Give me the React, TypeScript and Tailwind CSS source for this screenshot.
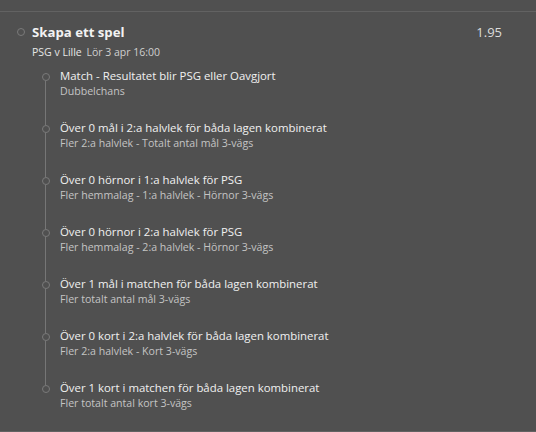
const items = [
  { title: 'Match - Resultatet blir PSG eller Oavgjort', sub: 'Dubbelchans' },
  { title: 'Över 0 mål i 2:a halvlek för båda lagen kombinerat', sub: 'Fler 2:a halvlek - Totalt antal mål 3-vägs' },
  { title: 'Över 0 hörnor i 1:a halvlek för PSG', sub: 'Fler hemmalag - 1:a halvlek - Hörnor 3-vägs' },
  { title: 'Över 0 hörnor i 2:a halvlek för PSG', sub: 'Fler hemmalag - 2:a halvlek - Hörnor 3-vägs' },
  { title: 'Över 1 mål i matchen för båda lagen kombinerat', sub: 'Fler totalt antal mål 3-vägs' },
  { title: 'Över 0 kort i 2:a halvlek för båda lagen kombinerat', sub: 'Fler 2:a halvlek - Kort 3-vägs' },
  { title: 'Över 1 kort i matchen för båda lagen kombinerat', sub: 'Fler totalt antal kort 3-vägs' },
];

export default function App() {
  return (
    <div className="w-[536px] h-[432px] bg-[#505050] pt-[11px] overflow-hidden" style={{ fontFamily: '"Open Sans", "Noto Sans", sans-serif' }}>
      <div className="border-t border-b border-[#626262] pt-[10px] pb-[20px]">
        {/* header */}
        <div className="flex items-center pl-[17px] pr-[34px]">
          <div className="w-[8px] h-[8px] rounded-full border border-[#7a7a7a]" />
          <div className="ml-[7px] flex-1 text-[13.2px] leading-[20px] font-bold text-[#f2f2f2]">Skapa ett spel</div>
          <div className="text-[13px] leading-[20px] text-[#dcdcdc]">1.95</div>
        </div>
        <div className="pl-[32px] mt-[2px] text-[10.5px] leading-[16px] text-[#e6e6e6]">
          PSG v Lille <span className="ml-[2px] text-[#cfcfcf]">Lör 3 apr 16:00</span>
        </div>

        {/* bet legs */}
        <div className="mt-[8px] pl-[41px]">
          {items.map((it, i) => {
            const first = i === 0;
            const last = i === items.length - 1;
            return (
              <div key={i} className="flex">
                <div className="w-[9px] flex flex-col items-center">
                  <div className={`w-px h-[5px] ${first ? 'bg-transparent' : 'bg-[#767676]'}`} />
                  <div className="w-[8px] h-[8px] rounded-full border border-[#7a7a7a]" />
                  <div className={`w-px flex-1 ${last ? 'bg-transparent' : 'bg-[#767676]'}`} />
                </div>
                <div className={`ml-[10px] ${last ? 'pb-0' : 'pb-[21px]'}`}>
                  <div className="text-[11.4px] leading-[16px] text-[#f0f0f0] whitespace-nowrap">{it.title}</div>
                  <div className="text-[10.6px] leading-[15px] text-[#c4c4c4] whitespace-nowrap">{it.sub}</div>
                </div>
              </div>
            );
          })}
        </div>
      </div>
    </div>
  );
}
